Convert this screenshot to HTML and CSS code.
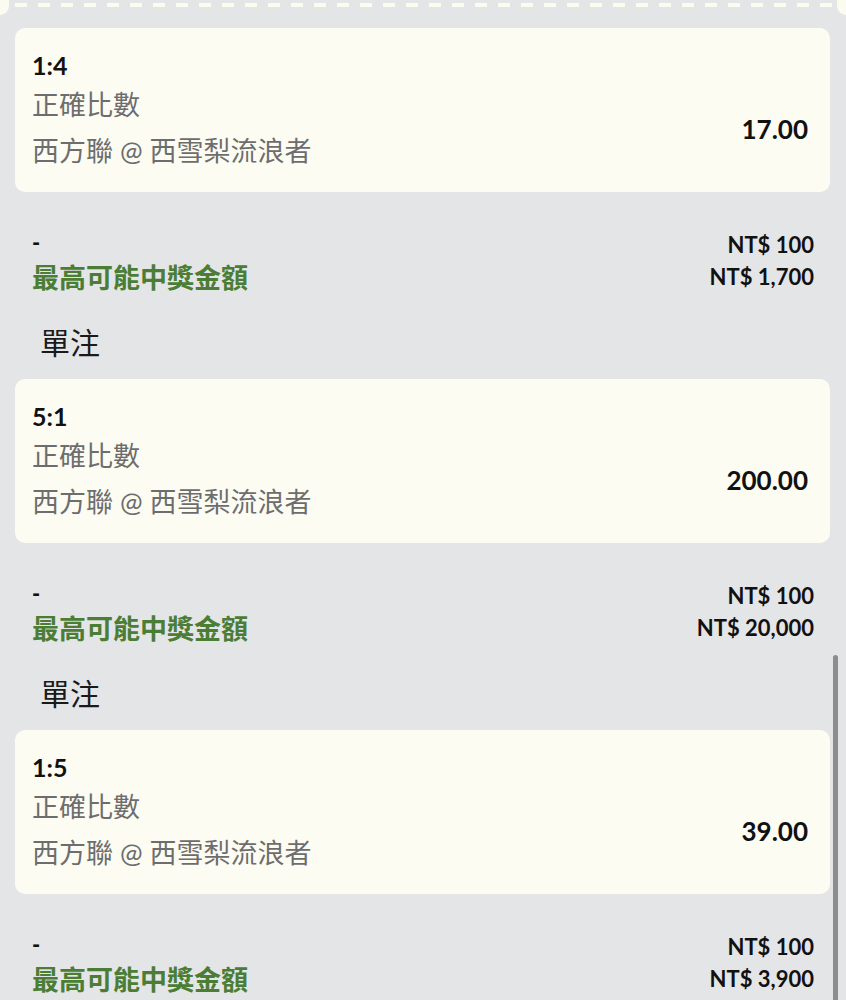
FILE: index.html
```html
<!DOCTYPE html>
<html lang="zh-Hant">
<head>
    <meta charset="utf-8">
    <meta name="viewport" content="width=device-width, initial-scale=1.0">
    <title>投注單</title>
    <link rel="stylesheet" href="styles.css">
</head>
<body>

<div class="slip">
    <div class="tear">
        <span class="notch left"></span>
        <span class="notch right"></span>
    </div>

    <div class="bets">
        <div class="bet">
            <div class="bet-info">
                <div class="score">1:4</div>
                <div class="market">正確比數</div>
                <div class="match">西方聯 @ 西雪梨流浪者</div>
            </div>
            <div class="odds">17.00</div>
        </div>
        <div class="summary">
            <div class="row"><span class="dash">-</span><span class="amount">NT$ 100</span></div>
            <div class="row"><span class="win">最高可能中獎金額</span><span class="amount">NT$ 1,700</span></div>
        </div>

        <div class="type">單注</div>
        <div class="bet">
            <div class="bet-info">
                <div class="score">5:1</div>
                <div class="market">正確比數</div>
                <div class="match">西方聯 @ 西雪梨流浪者</div>
            </div>
            <div class="odds">200.00</div>
        </div>
        <div class="summary">
            <div class="row"><span class="dash">-</span><span class="amount">NT$ 100</span></div>
            <div class="row"><span class="win">最高可能中獎金額</span><span class="amount">NT$ 20,000</span></div>
        </div>

        <div class="type">單注</div>
        <div class="bet">
            <div class="bet-info">
                <div class="score">1:5</div>
                <div class="market">正確比數</div>
                <div class="match">西方聯 @ 西雪梨流浪者</div>
            </div>
            <div class="odds">39.00</div>
        </div>
        <div class="summary">
            <div class="row"><span class="dash">-</span><span class="amount">NT$ 100</span></div>
            <div class="row"><span class="win">最高可能中獎金額</span><span class="amount">NT$ 3,900</span></div>
        </div>
    </div>

    <div class="scroll-thumb"></div>
</div>

</body>
</html>
```

FILE: styles.css
```css
html, body {
    margin: 0;
    height: 100%;
    overflow: hidden;
}
body {
    font-family: 'Lato', 'Noto Sans CJK TC', sans-serif;
    background-color: #e4e5e7;
    color: #111;
}
.slip {
    position: relative;
    height: 100%;
}
.tear {
    position: relative;
    height: 28px;
}
.tear::before {
    content: "";
    position: absolute;
    left: 15px;
    right: 0;
    top: 3px;
    height: 4px;
    background: repeating-linear-gradient(to right, #fbfbf0 0 12px, transparent 12px 23px);
}
.notch {
    position: absolute;
    top: 0;
    width: 9px;
    height: 15px;
    background-color: #fbfbf0;
}
.notch.left {
    left: 0;
    border-bottom-right-radius: 9px;
}
.notch.right {
    right: 0;
    border-bottom-left-radius: 9px;
}
.bets {
    padding: 0 16px 0 15px;
}
.bet {
    display: flex;
    justify-content: space-between;
    height: 164px;
    box-sizing: border-box;
    padding: 20px 22px 18px 17px;
    background-color: #fcfcf3;
    border-radius: 10px;
}
.score {
    font-size: 25px;
    font-weight: bold;
    line-height: 34px;
}
.market, .match {
    font-size: 27px;
    line-height: 46px;
    color: #6d6d6d;
}
.odds {
    align-self: center;
    margin-top: 36px;
    font-size: 26px;
    font-weight: bold;
    line-height: 34px;
}
.summary {
    margin-top: 36px;
    padding: 0 16px 0 17px;
}
.row {
    display: flex;
    justify-content: space-between;
    align-items: center;
    height: 32px;
}
.dash {
    font-size: 22px;
    font-weight: 900;
    margin-top: -4px;
}
.win {
    font-size: 27px;
    font-weight: bold;
    color: #4b7d35;
}
.amount {
    font-size: 22px;
    font-weight: bold;
}
.type {
    margin-top: 28px;
    margin-bottom: 15px;
    padding-left: 25px;
    font-size: 30px;
    line-height: 44px;
    color: #1a1a1a;
}
.scroll-thumb {
    position: absolute;
    right: 8px;
    top: 655px;
    width: 5px;
    height: 360px;
    border-radius: 3px;
    background-color: #8d8d8d;
}
```
